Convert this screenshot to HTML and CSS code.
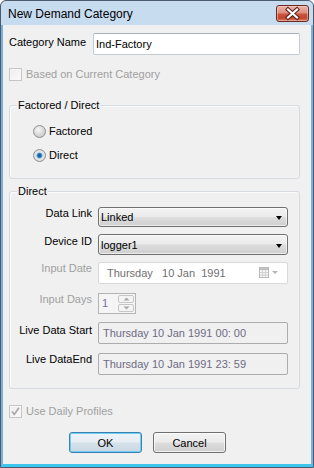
FILE: index.html
```html
<!DOCTYPE html>
<html>
<head>
<meta charset="utf-8">
<link rel="stylesheet" href="styles.css">
</head>
<body>
<div class="window">
  <div class="titlebar">
    <span class="title">New Demand Category</span>
    <div class="close">
      <svg width="31" height="15" viewBox="0 0 31 15">
        <path d="M11 3.5 L20 11.5 M20 3.5 L11 11.5" stroke="#5b2118" stroke-width="4.2" stroke-linecap="square" fill="none"/>
        <path d="M11 3.5 L20 11.5 M20 3.5 L11 11.5" stroke="#ffffff" stroke-width="2.2" stroke-linecap="square" fill="none"/>
      </svg>
    </div>
  </div>
  <div class="client">
    <div class="name-row">
      <span class="name-label">Category Name</span>
      <div class="textbox">Ind-Factory</div>
    </div>
    <div class="check-row check-top disabled">
      <span class="checkbox"></span>
      <span>Based on Current Category</span>
    </div>

    <div class="group g1">
      <span class="legend">Factored / Direct</span>
      <div class="radio-row rr1"><span class="radio"></span><span>Factored</span></div>
      <div class="radio-row rr2"><span class="radio checked"></span><span>Direct</span></div>
    </div>

    <div class="group g2">
      <span class="legend">Direct</span>
      <div class="frow f1">
        <span class="flabel">Data Link</span>
        <div class="combo"><span>Linked</span><span class="arrow"></span></div>
      </div>
      <div class="frow f2">
        <span class="flabel p1">Device ID</span>
        <div class="combo c2"><span>logger1</span><span class="arrow"></span></div>
      </div>
      <div class="frow f3">
        <span class="flabel gray">Input Date</span>
        <div class="datebox">
          <span class="datetext">Thursday   10 Jan  1991</span>
          <svg class="cal" width="20" height="12" viewBox="0 0 20 12">
            <rect x="0.5" y="0.5" width="9" height="10" fill="#f4f4f4" stroke="#b8b8b8"/>
            <rect x="0.5" y="0.5" width="9" height="2" fill="#c8c8c8" stroke="#b8b8b8"/>
            <path d="M3.5 3 V10.5 M6.5 3 V10.5 M1 5.5 H9 M1 8 H9" stroke="#d2d2d2" stroke-width="1"/>
            <path d="M13 4 L19 4 L16 7 Z" fill="#b5b5b5"/>
          </svg>
        </div>
      </div>
      <div class="frow f4">
        <span class="flabel gray">Input Days</span>
        <div class="spin">
          <span class="spintext">1</span>
          <div class="spinbtns">
            <span class="sbtn"><svg width="7" height="4" viewBox="0 0 7 4"><path d="M0.5 3.5 L3.5 0.5 L6.5 3.5 Z" fill="#a8a8a8"/></svg></span>
            <span class="sbtn"><svg width="7" height="4" viewBox="0 0 7 4"><path d="M0.5 0.5 L3.5 3.5 L6.5 0.5 Z" fill="#a8a8a8"/></svg></span>
          </div>
        </div>
      </div>
      <div class="frow f5">
        <span class="flabel p2">Live Data Start</span>
        <div class="livebox">Thursday 10 Jan 1991 00: 00</div>
      </div>
      <div class="frow f6">
        <span class="flabel">Live DataEnd</span>
        <div class="livebox">Thursday 10 Jan 1991 23: 59</div>
      </div>
    </div>

    <div class="check-row check-bottom disabled">
      <span class="checkbox checked">
        <svg width="11" height="11" viewBox="0 0 11 11"><path d="M2 5.5 L4.3 8.5 L9 1.8" stroke="#a6a6a6" stroke-width="1.6" fill="none"/></svg>
      </span>
      <span>Use Daily Profiles</span>
    </div>

    <div class="buttons">
      <div class="btn default">OK</div>
      <div class="btn">Cancel</div>
    </div>
  </div>
</div>
</body>
</html>
```

FILE: styles.css
```css
html, body {
  margin: 0;
  padding: 0;
  background: #ffffff;
}
body {
  font-family: "Liberation Sans", Arial, sans-serif;
  font-size: 11px;
  line-height: 13px;
  color: #000;
}
.window {
  width: 314px;
  height: 468px;
  box-sizing: border-box;
  border: 1px solid #4b5a6c;
  border-radius: 6px 6px 0 0;
  background: linear-gradient(#c8dcf0, #b9d0e9);
  display: flex;
  flex-direction: column;
  overflow: hidden;
}
.titlebar {
  height: 24px;
  flex: none;
  display: flex;
  align-items: center;
  justify-content: space-between;
  padding: 0 4px 0 7px;
}
.title {
  font-size: 12px;
  line-height: 15px;
  padding-top: 2px;
  color: #000;
}
.close {
  width: 31px;
  height: 15px;
  border: 1px solid #6a2a22;
  border-radius: 3px;
  background: linear-gradient(#eab3a8 0%, #dd8f7f 45%, #c9553e 55%, #c2452e 80%, #d77a5c 100%);
  box-shadow: inset 0 0 0 1px rgba(255,220,210,0.45);
  display: flex;
}
.client {
  flex: 1;
  background: #f0f0f0;
  border-left: 2px solid #79b0e0;
  border-right: 2px solid #79b0e0;
  border-bottom: 3px solid #3ec6ee;
  padding: 8px 0 0 6px;
  display: flex;
  flex-direction: column;
  align-items: flex-start;
}
.name-row {
  display: flex;
  align-items: flex-start;
}
.name-label {
  width: 84px;
  padding-top: 3px;
}
.textbox {
  width: 207px;
  height: 22px;
  box-sizing: border-box;
  border: 1px solid #c3cbd6;
  border-top-color: #a7afba;
  border-radius: 2px;
  background: #fff;
  padding-left: 2px;
  display: flex;
  align-items: center;
}
.check-row {
  display: flex;
  align-items: center;
  gap: 4px;
  height: 13px;
}
.check-top { margin-top: 13px; }
.check-bottom { margin-top: 16px; }
.disabled { color: #a0a0a0; }
.checkbox {
  width: 13px;
  height: 13px;
  box-sizing: border-box;
  border: 1px solid #c6c6c6;
  background: linear-gradient(135deg, #ececec, #fbfbfb);
  box-shadow: inset 0 0 0 1px #f6f6f6;
  display: flex;
  align-items: center;
  justify-content: center;
}
.group {
  width: 291px;
  box-sizing: border-box;
  border: 1px solid #d5dbe1;
  border-radius: 3px;
  box-shadow: inset 1px 1px 0 #fbfbfb;
  display: flex;
  flex-direction: column;
  align-items: flex-start;
}
.g1 {
  margin-top: 24px;
  height: 74px;
}
.g2 {
  margin-top: 12px;
  height: 198px;
}
.legend {
  margin: -7px 0 0 7px;
  padding: 0 1px;
  background: #f0f0f0;
  line-height: 13px;
}
.radio-row {
  display: flex;
  align-items: center;
  gap: 3px;
  height: 13px;
  margin-left: 23px;
}
.rr1 { margin-top: 13px; }
.rr2 { margin-top: 11px; }
.radio {
  width: 13px;
  height: 13px;
  box-sizing: border-box;
  border-radius: 50%;
  border: 1px solid #8d8f91;
  background: radial-gradient(circle at 40% 35%, #f6f6f6 0%, #dcdcdc 45%, #bdbdbd 100%);
}
.radio.checked {
  background: radial-gradient(circle at 50% 50%, #0f5a9e 0%, #1d6fb8 22%, #4fa0dc 32%, #e8e8e8 44%, #cfcfcf 100%);
}
.frow {
  display: flex;
  align-items: flex-start;
}
.flabel {
  width: 82px;
  margin-right: 6px;
  text-align: right;
  white-space: nowrap;
}
.flabel.p1 { padding-top: 1px; }
.flabel.p2 { padding-top: 2px; }
.flabel.gray { color: #a0a0a0; }
.f1 { margin-top: 9px; }
.f2 { margin-top: 7px; }
.f3 { margin-top: 7px; }
.f4 { margin-top: 9px; }
.f5 { margin-top: 8px; }
.f6 { margin-top: 9px; }
.combo {
  width: 190px;
  height: 20px;
  box-sizing: border-box;
  border: 1px solid #707070;
  border-radius: 3px;
  background: linear-gradient(#f3f3f3 0%, #ebebeb 48%, #dddddd 52%, #cfcfcf 100%);
  box-shadow: inset 0 0 0 1px rgba(255,255,255,0.6);
  display: flex;
  align-items: center;
  justify-content: space-between;
  padding: 1px 5px 0 2px;
}
.combo.c2 { height: 21px; }
.arrow {
  width: 0;
  height: 0;
  border-left: 3.5px solid transparent;
  border-right: 3.5px solid transparent;
  border-top: 4px solid #000;
  margin-top: 1px;
}
.datebox {
  width: 190px;
  height: 22px;
  box-sizing: border-box;
  border: 1px solid #d9d9d9;
  border-radius: 2px;
  background: #fff;
  display: flex;
  align-items: center;
  justify-content: space-between;
  padding: 1px 8px 0 8px;
}
.datetext {
  white-space: pre;
  color: #6f6f6f;
}
.cal { margin-top: -1px; }
.spin {
  width: 38px;
  height: 21px;
  box-sizing: border-box;
  border: 1px solid #b4b4b4;
  background: #f5f5f5;
  display: flex;
  align-items: stretch;
}
.spintext {
  flex: 1;
  padding-left: 3px;
  display: flex;
  align-items: center;
  color: #7d6e9c;
}
.spinbtns {
  width: 17px;
  display: flex;
  flex-direction: column;
  gap: 1px;
  padding: 1px 1px 1px 0;
  box-sizing: border-box;
}
.sbtn {
  flex: 1;
  border: 1px solid #c6c6c6;
  border-radius: 2px;
  background: #f4f4f4;
  display: flex;
  align-items: center;
  justify-content: center;
}
.livebox {
  width: 190px;
  height: 22px;
  box-sizing: border-box;
  border: 1px solid #acacac;
  border-radius: 2px;
  background: #f0f0f0;
  color: #6e6b83;
  padding: 1px 0 0 4px;
  display: flex;
  align-items: center;
  white-space: nowrap;
}
.buttons {
  margin-top: 14px;
  margin-left: 60px;
  display: flex;
  gap: 11px;
}
.btn {
  width: 73px;
  height: 21px;
  box-sizing: border-box;
  border: 1px solid #707070;
  border-radius: 3px;
  background: linear-gradient(#f3f3f3 0%, #ebebeb 48%, #dddddd 52%, #cfcfcf 100%);
  box-shadow: inset 0 0 0 1px rgba(255,255,255,0.7);
  display: flex;
  align-items: center;
  justify-content: center;
  padding-top: 1px;
}
.btn.default {
  border-color: #3c7fb1;
  box-shadow: inset 0 0 0 1px #6fd0f5;
  background: linear-gradient(#eef4f8 0%, #e6eef4 48%, #d6e2ea 52%, #c9d7e2 100%);
}
```
